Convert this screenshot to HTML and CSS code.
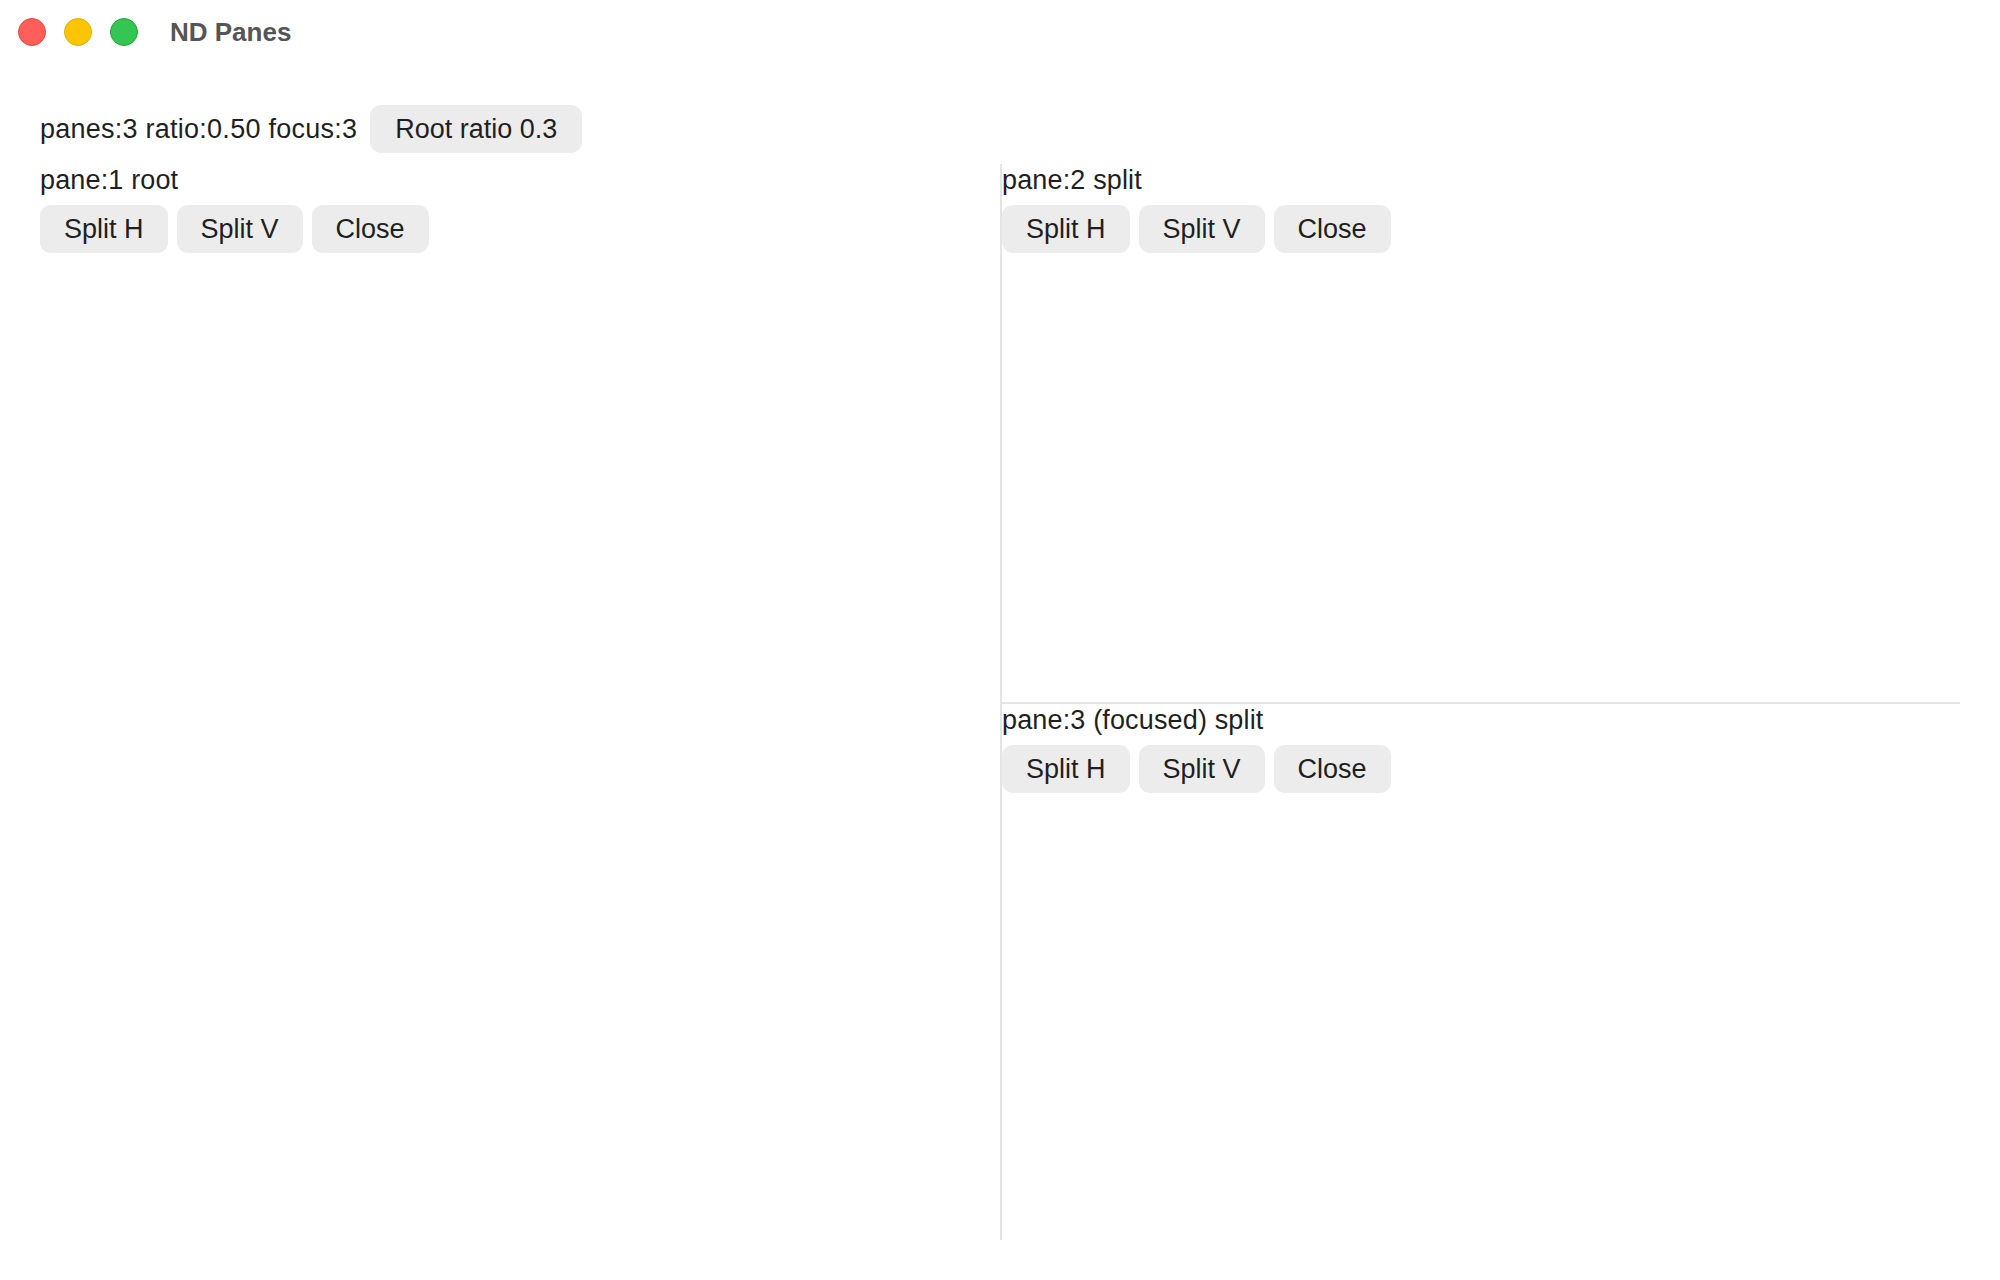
FILE: index.html
```html
<!DOCTYPE html>
<html lang="en">
<head>
<meta charset="utf-8">
<title>ND Panes</title>
<link rel="stylesheet" href="styles.css">
</head>
<body>
<div class="window">
  <header class="titlebar">
    <div class="lights">
      <span class="light red"></span>
      <span class="light yellow"></span>
      <span class="light green"></span>
    </div>
    <div class="title">ND Panes</div>
  </header>
  <main class="content">
    <div class="toolbar">
      <span class="status">panes:3 ratio:0.50 focus:3</span>
      <button class="btn wide">Root ratio 0.3</button>
    </div>
    <div class="panes">
      <section class="pane left">
        <div class="label">pane:1 root</div>
        <div class="actions">
          <button class="btn">Split H</button>
          <button class="btn">Split V</button>
          <button class="btn">Close</button>
        </div>
      </section>
      <div class="vdivider"></div>
      <div class="stack">
        <section class="pane top">
          <div class="label">pane:2 split</div>
          <div class="actions">
            <button class="btn">Split H</button>
            <button class="btn">Split V</button>
            <button class="btn">Close</button>
          </div>
        </section>
        <div class="hdivider"></div>
        <section class="pane bottom">
          <div class="label">pane:3 (focused) split</div>
          <div class="actions">
            <button class="btn">Split H</button>
            <button class="btn">Split V</button>
            <button class="btn">Close</button>
          </div>
        </section>
      </div>
    </div>
  </main>
</div>
</body>
</html>
```
FILE: styles.css
```css
html, body {
  margin: 0;
  padding: 0;
  background: #ffffff;
}

body {
  font-family: "Liberation Sans", Arial, Helvetica, sans-serif;
  color: #1f1f1f;
  font-size: 27px;
}

.window {
  width: 2000px;
  height: 1280px;
  display: flex;
  flex-direction: column;
}

.titlebar {
  height: 64px;
  display: flex;
  align-items: center;
  padding-left: 18px;
}

.lights {
  display: flex;
  gap: 18px;
}

.light {
  width: 28px;
  height: 28px;
  border-radius: 50%;
  box-sizing: border-box;
}

.red {
  background: #ff5f58;
  border: 1px solid #e2463f;
}

.yellow {
  background: #fcc503;
  border: 1px solid #e0ad00;
}

.green {
  background: #33c653;
  border: 1px solid #20a83a;
}

.title {
  margin-left: 32px;
  font-size: 26px;
  font-weight: bold;
  color: #555555;
}

.content {
  padding: 41px 40px 0 40px;
  display: flex;
  flex-direction: column;
}

.toolbar {
  display: flex;
  align-items: center;
  gap: 13px;
  height: 48px;
}

.status {
  line-height: 30px;
  letter-spacing: 0.25px;
}

.btn {
  font-family: "Liberation Sans", Arial, Helvetica, sans-serif;
  font-size: 27px;
  color: #1f1f1f;
  background: #ececec;
  border: none;
  border-radius: 11px;
  height: 48px;
  padding: 0 24px;
  margin: 0;
  line-height: 48px;
}

.btn.wide {
  padding: 0 25px;
}

.panes {
  margin-top: 11px;
  width: 1920px;
  height: 1076px;
  display: flex;
}

.pane.left {
  width: 960px;
}

.vdivider {
  width: 2px;
  background: #e4e4e4;
}

.stack {
  flex: 1;
  display: flex;
  flex-direction: column;
}

.pane.top {
  height: 538px;
}

.hdivider {
  height: 2px;
  background: #e4e4e4;
}

.pane.bottom {
  flex: 1;
}

.label {
  line-height: 30px;
  height: 30px;
  padding-top: 1px;
  margin-bottom: 10px;
  letter-spacing: 0.15px;
}

.actions {
  display: flex;
  gap: 9px;
}
```
